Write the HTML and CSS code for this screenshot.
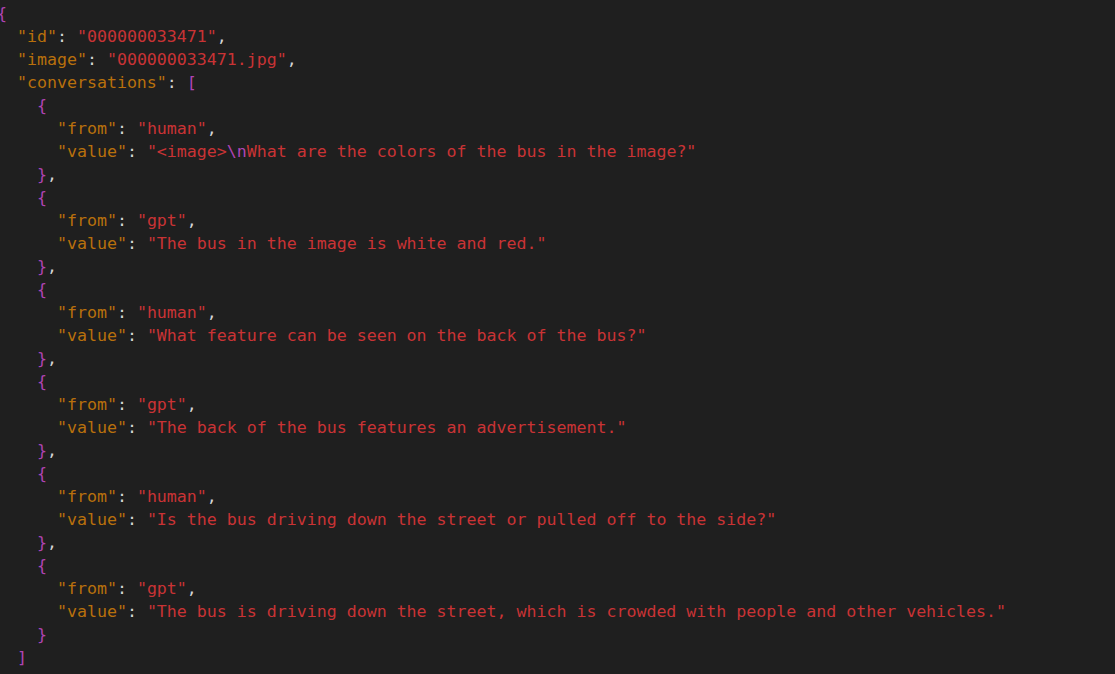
FILE: index.html
```html
<!DOCTYPE html>
<html>
<head>
<meta charset="utf-8">
<link rel="stylesheet" href="styles.css">
</head>
<body>
<pre class="code"><span class="b">{</span>
  <span class="k">"id"</span><span class="p">: </span><span class="s">"000000033471"</span><span class="p">,</span>
  <span class="k">"image"</span><span class="p">: </span><span class="s">"000000033471.jpg"</span><span class="p">,</span>
  <span class="k">"conversations"</span><span class="p">: </span><span class="b">[</span>
    <span class="b">{</span>
      <span class="k">"from"</span><span class="p">: </span><span class="s">"human"</span><span class="p">,</span>
      <span class="k">"value"</span><span class="p">: </span><span class="s">"&lt;image&gt;<span class="e">\n</span>What are the colors of the bus in the image?"</span>
    <span class="b">}</span><span class="p">,</span>
    <span class="b">{</span>
      <span class="k">"from"</span><span class="p">: </span><span class="s">"gpt"</span><span class="p">,</span>
      <span class="k">"value"</span><span class="p">: </span><span class="s">"The bus in the image is white and red."</span>
    <span class="b">}</span><span class="p">,</span>
    <span class="b">{</span>
      <span class="k">"from"</span><span class="p">: </span><span class="s">"human"</span><span class="p">,</span>
      <span class="k">"value"</span><span class="p">: </span><span class="s">"What feature can be seen on the back of the bus?"</span>
    <span class="b">}</span><span class="p">,</span>
    <span class="b">{</span>
      <span class="k">"from"</span><span class="p">: </span><span class="s">"gpt"</span><span class="p">,</span>
      <span class="k">"value"</span><span class="p">: </span><span class="s">"The back of the bus features an advertisement."</span>
    <span class="b">}</span><span class="p">,</span>
    <span class="b">{</span>
      <span class="k">"from"</span><span class="p">: </span><span class="s">"human"</span><span class="p">,</span>
      <span class="k">"value"</span><span class="p">: </span><span class="s">"Is the bus driving down the street or pulled off to the side?"</span>
    <span class="b">}</span><span class="p">,</span>
    <span class="b">{</span>
      <span class="k">"from"</span><span class="p">: </span><span class="s">"gpt"</span><span class="p">,</span>
      <span class="k">"value"</span><span class="p">: </span><span class="s">"The bus is driving down the street, which is crowded with people and other vehicles."</span>
    <span class="b">}</span>
  <span class="b">]</span>
<span class="b">}</span></pre>
</body>
</html>
```
FILE: styles.css
```css
html, body {
  margin: 0;
  padding: 0;
  background: #1f1f1f;
  overflow: hidden;
}

.code {
  margin: 0 0 0 -3px;
  padding: 2px 0 0 0;
  font-family: "DejaVu Sans Mono", "Liberation Mono", monospace;
  font-size: 16.6px;
  line-height: 23px;
  color: #d4d4d4;
  white-space: pre;
}

.k { color: #b8700c; }
.s { color: #c93335; }
.p { color: #d4d4d4; }
.b { color: #b044b4; }
.e { color: #b044b4; }
```
